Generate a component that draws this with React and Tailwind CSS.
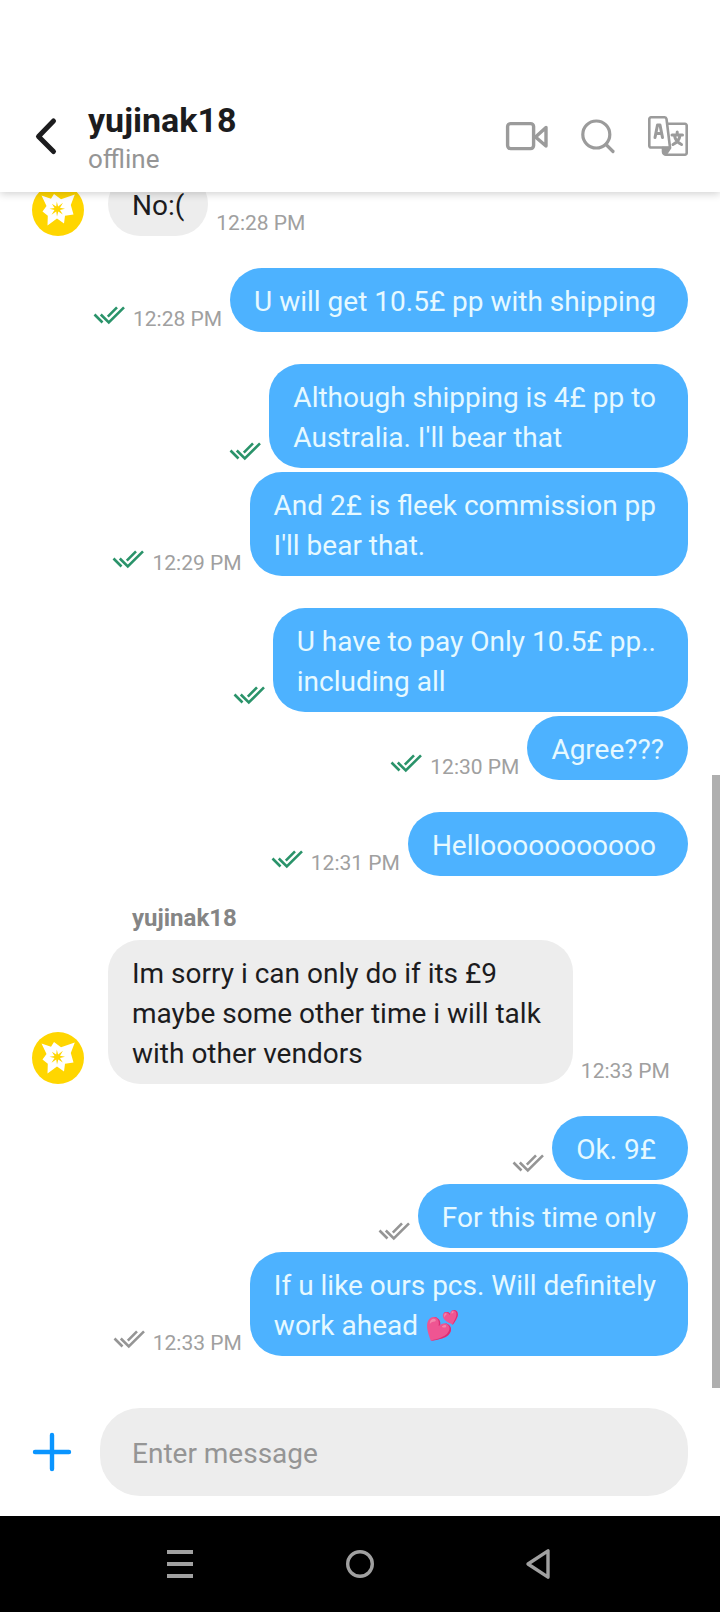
const messages = [
  { id: 1, from: 'them', text: 'No:(', time: '12:28 PM', tight: true },
  { id: 2, from: 'me', text: 'U will get 10.5£ pp with shipping', time: '12:28 PM', read: true },
  { id: 3, from: 'me', text: "Although shipping is 4£ pp to\nAustralia. I'll bear that", read: true },
  { id: 4, from: 'me', text: "And 2£ is fleek commission pp\nI'll bear that.", time: '12:29 PM', read: true, grouped: true },
  { id: 5, from: 'me', text: 'U have to pay Only 10.5£ pp..\nincluding all', read: true },
  { id: 6, from: 'me', text: 'Agree???', time: '12:30 PM', read: true, grouped: true, tight: true },
  { id: 7, from: 'me', text: 'Hellooooooooooo', time: '12:31 PM', read: true },
  { id: 8, from: 'them', name: 'yujinak18', text: 'Im sorry i can only do if its £9\nmaybe some other time i will talk\nwith other vendors', time: '12:33 PM' },
  { id: 9, from: 'me', text: 'Ok. 9£' },
  { id: 10, from: 'me', text: 'For this time only', grouped: true },
  { id: 11, from: 'me', text: 'If u like ours pcs. Will definitely\nwork ahead 💕', time: '12:33 PM', grouped: true },
]

function Ticks({ read }) {
  return (
    <svg
      width="32"
      height="20"
      viewBox="0 0 32 20"
      fill="none"
      strokeWidth="2.6"
      className={read ? 'mb-[7px] shrink-0 stroke-[#2a936a]' : 'mb-[7px] shrink-0 stroke-[#959595]'}
      role="img"
      aria-label={read ? 'Read' : 'Delivered'}
    >
      <path d="M1.5 9.5l8 8M7.8 9.5l8 8L31 2.3M14.8 11.6L24 2.3" />
    </svg>
  )
}

function Avatar() {
  return (
    <svg width="52" height="52" viewBox="0 0 52 52" className="shrink-0" aria-hidden="true">
      <circle cx="26" cy="26" r="26" fill="#ffd600" />
      <path
        d="M9.5 11.5L19 14.800L22 10L29 15.300L42.800 10.500L38.800 21L41.500 30.500L33 31.800L32 39.500L25 34.500L15.500 41.500L15.800 31.800L10.500 27.500L14.500 22z"
        fill="#fff"
      />
      <path
        d="M24.800 17.500l1.300 5 4.900-3.800-3 5 5 1-5 1.300 2.800 4.500-4.500-3-1.300 5-.8-5-4.700 3.200 3-4.700-5-1.200 5-.9-2.600-4.200 4.300 2.800z"
        fill="#ffd600"
      />
    </svg>
  )
}

function Time({ children }) {
  return <time className="shrink-0 whitespace-nowrap text-[21px] leading-[26px] text-[#a0a0a0]">{children}</time>
}

function Received({ message }) {
  return (
    <li className={message.name ? 'mt-7' : 'mt-8'}>
      {message.name && <div className="pb-2 pl-[100px] text-2xl leading-7 font-bold text-[#858585]">{message.name}</div>}
      <div className="flex items-end">
        <Avatar />
        <p
          className={
            message.tight
              ? 'mx-6 mr-2 whitespace-pre-line rounded-[32px] bg-[#ededed] px-6 pt-3.5 pb-2.5 text-[28px] leading-10 text-[#1c1c1e]'
              : 'mx-6 mr-2 whitespace-pre-line rounded-[32px] bg-[#ededed] pt-3.5 pr-8 pb-2.5 pl-6 text-[28px] leading-10 text-[#1c1c1e]'
          }
        >
          {message.text}
        </p>
        <Time>{message.time}</Time>
      </div>
    </li>
  )
}

function Sent({ message }) {
  return (
    <li className={message.grouped ? 'mt-1 flex items-end justify-end gap-2' : 'mt-8 flex items-end justify-end gap-2'}>
      <Ticks read={message.read} />
      {message.time && <Time>{message.time}</Time>}
      <p
        className={
          message.tight
            ? 'whitespace-pre-line rounded-[32px] bg-[#4db2ff] px-6 pt-3.5 pb-2.5 text-[28px] leading-10 text-[#e6f9ff]'
            : 'whitespace-pre-line rounded-[32px] bg-[#4db2ff] pt-3.5 pr-8 pb-2.5 pl-6 text-[28px] leading-10 text-[#e6f9ff]'
        }
      >
        {message.text}
      </p>
    </li>
  )
}

function Header() {
  return (
    <header className="relative z-10 bg-white pt-20 shadow-[0_2px_8px_rgba(0,0,0,0.18)]">
      <div className="flex h-28 items-center px-8">
        <button type="button" aria-label="Back" className="w-14 shrink-0">
          <svg width="28" height="40" viewBox="0 0 28 40" fill="none" stroke="#1c1c1e" strokeWidth="5" strokeLinecap="round" strokeLinejoin="round">
            <path d="M21.500 5L6.500 20.500l15 15" />
          </svg>
        </button>
        <div className="min-w-0 flex-1 pt-1">
          <h1 className="text-[34px] leading-[42px] font-bold text-[#1c1c1e]">yujinak18</h1>
          <p className="text-[26px] leading-9 text-[#959595]">offline</p>
        </div>
        <div className="flex items-center gap-8">
          <button type="button" aria-label="Video call">
            <svg width="44" height="40" viewBox="0 0 44 40" fill="none" stroke="#9b9b9b" strokeWidth="3.400" strokeLinejoin="round">
              <rect x="3.600" y="7.600" width="26" height="25" rx="3" />
              <path d="M42 11.500v18.500L31.500 21z" />
            </svg>
          </button>
          <button type="button" aria-label="Search">
            <svg width="36" height="40" viewBox="0 0 36 40" fill="none" stroke="#9b9b9b" strokeWidth="3.200" strokeLinecap="round">
              <circle cx="16.300" cy="18.500" r="13.500" />
              <path d="M26 28.500l7 7" />
            </svg>
          </button>
          <button type="button" aria-label="Translate">
            <svg width="40" height="40" viewBox="0 0 40 40" fill="none" stroke="#9b9b9b" strokeWidth="2.600" strokeLinejoin="round" strokeLinecap="round">
              <path d="M3 1.300h13.500a2 2 0 0 1 2 1.600L22 31.500H3a1.700 1.700 0 0 1-1.700-1.700V3A1.700 1.700 0 0 1 3 1.300z" />
              <path d="M19.500 7.800H37a1.700 1.700 0 0 1 1.700 1.700V37a1.700 1.700 0 0 1-1.700 1.700H18a3 3 0 0 1-3-3V32" />
              <path d="M15 32h7l-4 6z" fill="#9b9b9b" />
              <path d="M7 21.500L9.500 9h2.500l2.500 12.500M8 17.500h5.500" strokeWidth="3" />
              <path d="M24 19h10.500M29.200 16v3M25 28.500c4-2 6.500-5.500 7-9M33.500 28.500c-4-2-6.500-5.500-7-9" strokeWidth="3" />
            </svg>
          </button>
        </div>
      </div>
    </header>
  )
}

function Composer() {
  return (
    <form className="flex items-center bg-white px-8 py-5" onSubmit={(e) => e.preventDefault()}>
      <button type="button" aria-label="Add attachment" className="w-[68px] shrink-0">
        <svg width="40" height="40" viewBox="0 0 40 40" stroke="#0a95ff" strokeWidth="4.400" strokeLinecap="round">
          <path d="M20 3v34M3 20h34" />
        </svg>
      </button>
      <input
        type="text"
        aria-label="Enter message"
        placeholder="Enter message"
        className="h-[88px] min-w-0 flex-1 rounded-[40px] bg-[#ededed] px-8 pt-0.5 text-[28px] text-[#1c1c1e] outline-none placeholder:text-[#959595]"
      />
    </form>
  )
}

function SystemNav() {
  return (
    <nav className="grid h-24 shrink-0 grid-cols-3 items-center justify-items-center bg-black px-[12.5%]">
      <button type="button" aria-label="Recent apps">
        <svg width="32" height="32" viewBox="0 0 32 32" fill="#a0a0a0">
          <path d="M3 2h26v4H3zM3 14h26v4H3zM3 26h26v4H3z" />
        </svg>
      </button>
      <button type="button" aria-label="Home">
        <svg width="32" height="32" viewBox="0 0 32 32" fill="none" stroke="#a0a0a0" strokeWidth="3.400">
          <circle cx="16" cy="16" r="12.300" />
        </svg>
      </button>
      <button type="button" aria-label="Back">
        <svg width="32" height="32" viewBox="0 0 32 32" fill="none" stroke="#a0a0a0" strokeWidth="3.400" strokeLinejoin="round">
          <path d="M24 2.800v26.400L4 16z" />
        </svg>
      </button>
    </nav>
  )
}

export default function App() {
  return (
    <div className="flex h-screen flex-col bg-white font-['Roboto',sans-serif]">
      <Header />
      <main className="relative flex min-h-0 flex-1 flex-col justify-end overflow-hidden">
        <ol className="px-8 pb-8">
          {messages.map((m) => (m.from === 'me' ? <Sent key={m.id} message={m} /> : <Received key={m.id} message={m} />))}
        </ol>
        <div className="absolute right-0 bottom-0 h-[613px] w-2 bg-[#afafaf]" />
      </main>
      <Composer />
      <SystemNav />
    </div>
  )
}
